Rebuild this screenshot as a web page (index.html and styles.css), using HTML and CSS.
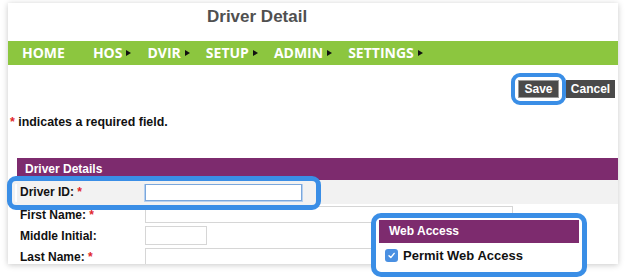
FILE: index.html
```html
<!DOCTYPE html>
<html>
<head>
<meta charset="utf-8">
<link rel="stylesheet" href="styles.css">
</head>
<body>
<div class="card">
  <header class="title">Driver Detail</header>
  <nav class="nav">
    <span class="nav-item home">HOME</span>
    <span class="nav-item">HOS<i class="tri"></i></span>
    <span class="nav-item">DVIR<i class="tri"></i></span>
    <span class="nav-item">SETUP<i class="tri"></i></span>
    <span class="nav-item">ADMIN<i class="tri"></i></span>
    <span class="nav-item">SETTINGS<i class="tri"></i></span>
  </nav>
  <div class="actions">
    <button class="btn btn-save">Save</button>
    <button class="btn btn-cancel">Cancel</button>
  </div>
  <p class="req"><span class="star">*</span> indicates a required field.</p>
  <section class="details">
    <h2 class="sec-head">Driver Details</h2>
    <div class="row row-first"><label class="lbl">Driver ID: <span class="star">*</span></label><input class="in in-id" type="text"></div>
    <div class="row"><label class="lbl">First Name: <span class="star">*</span></label><input class="in in-wide" type="text"></div>
    <div class="row"><label class="lbl">Middle Initial:</label><input class="in in-mid" type="text"></div>
    <div class="row"><label class="lbl">Last Name: <span class="star">*</span></label><input class="in in-wide" type="text"></div>
  </section>
</div>
<div class="hl hl-save"></div>
<div class="hl hl-id"></div>
<div class="callout">
  <div class="callout-head">Web Access</div>
  <div class="callout-row"><span class="check"><svg width="9" height="9" viewBox="0 0 9 9"><path d="M2 4.8 L3.8 6.6 L7.2 2.4" fill="none" stroke="#fff" stroke-width="1.4" stroke-linecap="round" stroke-linejoin="round"/></svg></span>Permit Web Access</div>
</div>
</body>
</html>
```

FILE: styles.css
```css
html, body {
  margin: 0;
  padding: 0;
  background: #ffffff;
}
body {
  position: relative;
  width: 627px;
  height: 279px;
  overflow: hidden;
  font-family: "Liberation Sans", Arial, sans-serif;
}
.card {
  margin: 3px 0 0 8px;
  width: 610px;
  height: 261px;
  background: #fff;
  box-shadow: 0 1px 6px rgba(0,0,0,0.22);
  overflow: hidden;
}
.title {
  height: 38px;
  box-sizing: border-box;
  padding: 4px 0 0 199px;
  line-height: 20px;
  font-size: 17px;
  font-weight: bold;
  color: #505050;
}
.nav {
  height: 24px;
  background: #8cc63f;
  display: flex;
  align-items: center;
  padding-left: 14px;
  gap: 16px;
  font-family: "Open Sans", sans-serif;
  font-weight: bold;
  font-size: 14px;
  letter-spacing: 0;
  color: #fff;
}
.nav-item {
  display: flex;
  align-items: center;
  line-height: 24px;
}
.nav-item.home { margin-right: 12px; }
.tri {
  display: inline-block;
  width: 0;
  height: 0;
  border-top: 3px solid transparent;
  border-bottom: 3px solid transparent;
  border-left: 5px solid #111;
  margin-left: 4px;
}
.actions {
  display: flex;
  justify-content: flex-end;
  gap: 7px;
  padding: 15px 3px 0 0;
}
.btn {
  margin: 0;
  height: 18px;
  padding: 0;
  border: 1px solid #4a4a4a;
  background: #4a4a4a;
  color: #fff;
  font-family: "Liberation Sans", Arial, sans-serif;
  font-weight: bold;
  font-size: 12px;
  line-height: 16px;
}
.btn-save { width: 41px; border-color: #9a9a9a; }
.btn-cancel { width: 49px; }
.req {
  margin: 17px 0 0 0;
  padding-left: 2px;
  font-size: 12.4px;
  font-weight: bold;
  line-height: 14px;
  color: #111;
}
.star { color: #e0262b; }
.details {
  margin: 29px 0 0 9px;
}
.sec-head {
  margin: 0;
  height: 22px;
  background: #7d2b6e;
  color: #fff;
  font-size: 12px;
  font-weight: bold;
  line-height: 22px;
  padding-left: 8px;
}
.row {
  display: flex;
  align-items: center;
  height: 21px;
}
.row-first {
  height: 24px;
  background: #f2f2f2;
}
.lbl {
  width: 128px;
  box-sizing: border-box;
  padding-left: 3px;
  font-size: 12px;
  font-weight: bold;
  color: #111;
}
.in {
  box-sizing: border-box;
  height: 17px;
  border: 1px solid #d6d6d6;
  background: #fff;
  margin: 0;
  padding: 0;
}
.in-id {
  width: 157px;
  border: 1px solid #7aa7dc;
  box-shadow: 0 0 0 1px #b5d0f0;
}
.in-wide { width: 368px; }
.in-mid { width: 62px; height: 19px; }
.hl {
  position: absolute;
  box-sizing: border-box;
  border: 4px solid #3a8ee6;
  border-radius: 9px;
}
.hl-save {
  left: 511px;
  top: 73px;
  width: 55px;
  height: 32px;
}
.hl-id {
  left: 7px;
  top: 176px;
  width: 314px;
  height: 34px;
  border-width: 5px;
  box-shadow: inset 0 0 0 3px #f2f2f2;
}
.callout {
  position: absolute;
  left: 371px;
  top: 213px;
  width: 216px;
  height: 64px;
  box-sizing: border-box;
  border: 5px solid #3a8ee6;
  border-radius: 10px;
  background: #fff;
  padding: 2px 3px;
}
.callout-head {
  height: 23px;
  background: #7d2b6e;
  color: #fff;
  font-size: 12px;
  font-weight: bold;
  line-height: 23px;
  padding-left: 10px;
}
.callout-row {
  display: flex;
  align-items: center;
  height: 24px;
  padding-left: 6px;
  font-size: 13px;
  font-weight: bold;
  color: #111;
}
.check {
  width: 13px;
  height: 13px;
  border-radius: 3px;
  background: #4a90e2;
  display: flex;
  align-items: center;
  justify-content: center;
  margin-right: 5px;
}
```
